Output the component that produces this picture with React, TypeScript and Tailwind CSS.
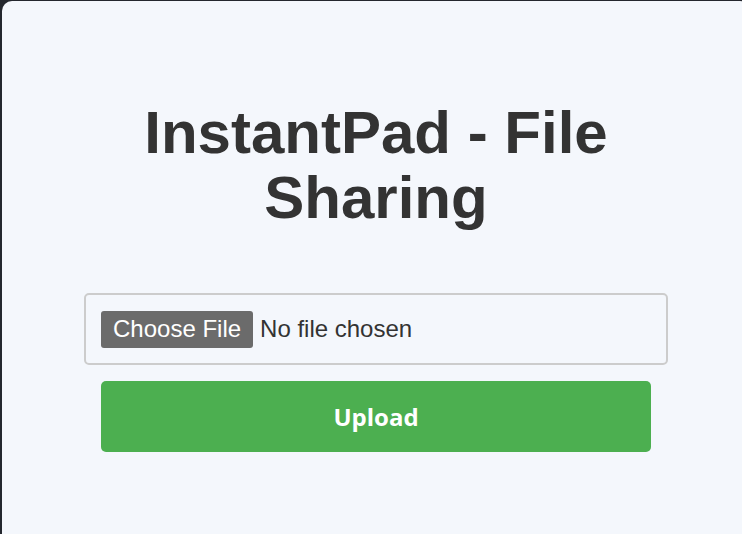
export default function App() {
  return (
    <div className="w-[742px] h-[534px] overflow-hidden bg-[#24272e] pt-px pl-[2px]">
      <div className="w-[748px] h-[600px] rounded-t-[10px] bg-[#f4f7fc] flex flex-col items-center pt-[99px]">
        <h1 className="text-[60px] leading-[65px] font-bold text-[#333333] text-center w-[500px] font-['Liberation_Sans',Arial,sans-serif]">
          InstantPad - File Sharing
        </h1>

        <form className="flex flex-col items-center mt-[63px]" onSubmit={(e) => e.preventDefault()}>
          <label className="w-[584px] h-[72px] border-2 border-[#cccccc] rounded-[5px] px-[15px] flex items-center gap-[7px] cursor-pointer font-['Liberation_Sans',Arial,sans-serif] text-[24px]">
            <input type="file" className="sr-only" />
            <span className="bg-[#6b6b6b] text-white h-[37px] px-[12px] rounded-[3px] flex items-center leading-none">
              Choose File
            </span>
            <span className="text-[#333333] leading-none">No file chosen</span>
          </label>

          <button
            type="submit"
            className="mt-[16px] w-[550px] h-[71px] bg-[#4caf50] text-white rounded-[5px] text-[24px] font-bold font-['Open_Sans',sans-serif]"
          >
            Upload
          </button>
        </form>
      </div>
    </div>
  );
}
